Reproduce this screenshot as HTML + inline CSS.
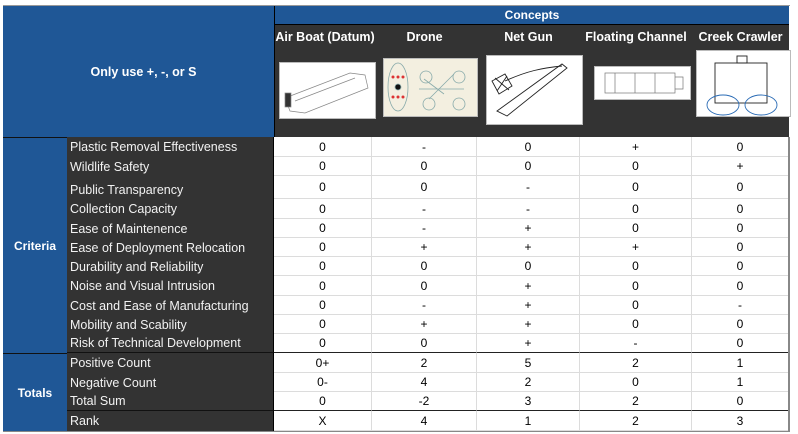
<!DOCTYPE html>
<html><head><meta charset="utf-8"><style>
*{margin:0;padding:0;box-sizing:border-box}
body{width:798px;height:434px;background:#fff;position:relative;overflow:hidden;font-family:"Liberation Sans",Arial,sans-serif;font-size:12px}
.a{position:absolute}
.blue{background:#1f5796;color:#fff;font-weight:bold}
.dark{background:#333;color:#fff}
.r{position:absolute;left:67px;width:722px;display:flex}
.r .l{width:207px;background:#333;color:#f2f2f2;padding-left:3px;font-size:12.5px;display:flex;align-items:center;border-right:1px solid #000}
.r .c{text-align:center;display:flex;align-items:center;justify-content:center;border-right:1px solid #dcdcdc;border-bottom:1px solid #dcdcdc;color:#000}
.r.k .c{border-bottom:1px solid #222}
.r.k .l{border-bottom:1px solid #111}
.c1{width:98px}.c2{width:105px}.c3{width:103px}.c4{width:112px}.c5{width:97px}
.h{position:absolute;top:30px;color:#fff;font-weight:bold;font-size:12.5px;text-align:center;white-space:nowrap}
.img{position:absolute;background:#fff;border:1px solid #bbb}
</style></head><body>
<div class="a" style="left:3px;top:5px;width:787px;height:1px;background:#999"></div>
<div class="a blue" style="left:3px;top:6px;width:271px;height:131px;display:flex;align-items:center;justify-content:center;font-size:12.5px;padding-left:10px">Only use +, -, or S</div>
<div class="a blue" style="left:274px;top:6px;width:515px;height:19px;text-align:center;line-height:19px;border-left:1px solid #000;border-bottom:1px solid #000">Concepts</div>
<div class="a dark" style="left:274px;top:25px;width:515px;height:112px;border-left:1px solid #000"></div>
<div class="h" style="left:274px;width:102px">Air Boat (Datum)</div>
<div class="h" style="left:372px;width:105px">Drone</div>
<div class="h" style="left:477px;width:103px">Net Gun</div>
<div class="h" style="left:580px;width:112px">Floating Channel</div>
<div class="h" style="left:692px;width:97px">Creek Crawler</div>
<div class="img" style="left:279px;top:62px;width:97px;height:57px"><svg width="95" height="55"><g stroke="#888" fill="none" stroke-width=".7"><path d="M5 35 L70 10 L85 12 L88 25 L25 50 L10 48 Z"/><path d="M15 38 L75 15"/><rect x="5" y="30" width="6" height="14" fill="#333"/></g></svg></div>
<div class="img" style="left:383px;top:58px;width:95px;height:59px;background:#f3efe0"><svg width="93" height="57"><g stroke="#8aa" fill="none" stroke-width=".8"><ellipse cx="14" cy="28" rx="10" ry="24"/><circle cx="14" cy="28" r="3" fill="#111"/><path d="M40 20 L60 35 M45 40 L70 15 M35 30 L80 30"/><circle cx="42" cy="18" r="6"/><circle cx="75" cy="18" r="6"/><circle cx="45" cy="45" r="6"/><circle cx="75" cy="45" r="6"/></g><g fill="#d33"><circle cx="9" cy="18" r="1.5"/><circle cx="14" cy="18" r="1.5"/><circle cx="19" cy="18" r="1.5"/><circle cx="9" cy="38" r="1.5"/><circle cx="14" cy="38" r="1.5"/><circle cx="19" cy="38" r="1.5"/></g></svg></div>
<div class="img" style="left:486px;top:55px;width:97px;height:70px"><svg width="95" height="68"><g stroke="#222" fill="none" stroke-width=".9"><path d="M10 55 L75 8 L80 12 L20 60 Z"/><path d="M5 25 L18 18 L25 30 L12 38 Z M8 22 L22 34 M20 20 L10 35"/><path d="M18 25 C40 15 55 12 75 10"/></g></svg></div>
<div class="img" style="left:594px;top:66px;width:97px;height:34px"><svg width="95" height="32"><g stroke="#777" fill="none" stroke-width=".7"><rect x="10" y="6" width="70" height="20"/><path d="M20 6 V26 M40 6 V26 M60 6 V26 M80 10 L88 10 L88 22 L80 22"/></g></svg></div>
<div class="img" style="left:696px;top:50px;width:95px;height:67px"><svg width="93" height="65"><g fill="none" stroke-width=".9"><rect x="18" y="12" width="52" height="40" stroke="#222"/><rect x="40" y="5" width="10" height="7" stroke="#222"/><ellipse cx="26" cy="54" rx="16" ry="10" stroke="#2a6bb5"/><ellipse cx="64" cy="54" rx="16" ry="10" stroke="#2a6bb5"/></g></svg></div>

<div class="a blue" style="left:3px;top:137px;width:64px;height:216px;display:flex;align-items:center;justify-content:center;border-top:1px solid #111">Criteria</div>
<div class="a blue" style="left:3px;top:353px;width:64px;height:78px;display:flex;align-items:center;justify-content:center;border-top:1px solid #111">Totals</div>

<div class="r" style="top:137px;height:20px"><div class="l">Plastic Removal Effectiveness</div><div class="c c1">0</div><div class="c c2">-</div><div class="c c3">0</div><div class="c c4">+</div><div class="c c5">0</div></div>
<div class="r" style="top:157px;height:19px"><div class="l">Wildlife Safety</div><div class="c c1">0</div><div class="c c2">0</div><div class="c c3">0</div><div class="c c4">0</div><div class="c c5">+</div></div>
<div class="r" style="top:176px;height:23px"><div class="l" style="align-items:flex-end;padding-bottom:2px">Public Transparency</div><div class="c c1">0</div><div class="c c2">0</div><div class="c c3">-</div><div class="c c4">0</div><div class="c c5">0</div></div>
<div class="r" style="top:199px;height:20px"><div class="l">Collection Capacity</div><div class="c c1">0</div><div class="c c2">-</div><div class="c c3">-</div><div class="c c4">0</div><div class="c c5">0</div></div>
<div class="r" style="top:219px;height:19px"><div class="l">Ease of Maintenence</div><div class="c c1">0</div><div class="c c2">-</div><div class="c c3">+</div><div class="c c4">0</div><div class="c c5">0</div></div>
<div class="r" style="top:238px;height:19px"><div class="l">Ease of Deployment Relocation</div><div class="c c1">0</div><div class="c c2">+</div><div class="c c3">+</div><div class="c c4">+</div><div class="c c5">0</div></div>
<div class="r" style="top:257px;height:19px"><div class="l">Durability and Reliability</div><div class="c c1">0</div><div class="c c2">0</div><div class="c c3">0</div><div class="c c4">0</div><div class="c c5">0</div></div>
<div class="r" style="top:276px;height:20px"><div class="l">Noise and Visual Intrusion</div><div class="c c1">0</div><div class="c c2">0</div><div class="c c3">+</div><div class="c c4">0</div><div class="c c5">0</div></div>
<div class="r" style="top:296px;height:19px"><div class="l">Cost and Ease of Manufacturing</div><div class="c c1">0</div><div class="c c2">-</div><div class="c c3">+</div><div class="c c4">0</div><div class="c c5">-</div></div>
<div class="r" style="top:315px;height:19px"><div class="l">Mobility and Scability</div><div class="c c1">0</div><div class="c c2">+</div><div class="c c3">+</div><div class="c c4">0</div><div class="c c5">0</div></div>
<div class="r k" style="top:334px;height:19px"><div class="l">Risk of Technical Development</div><div class="c c1">0</div><div class="c c2">0</div><div class="c c3">+</div><div class="c c4">-</div><div class="c c5">0</div></div>
<div class="r" style="top:353px;height:20px"><div class="l">Positive Count</div><div class="c c1">0+</div><div class="c c2">2</div><div class="c c3">5</div><div class="c c4">2</div><div class="c c5">1</div></div>
<div class="r" style="top:373px;height:19px"><div class="l">Negative Count</div><div class="c c1">0-</div><div class="c c2">4</div><div class="c c3">2</div><div class="c c4">0</div><div class="c c5">1</div></div>
<div class="r k" style="top:392px;height:19px"><div class="l">Total Sum</div><div class="c c1">0</div><div class="c c2">-2</div><div class="c c3">3</div><div class="c c4">2</div><div class="c c5">0</div></div>
<div class="r" style="top:411px;height:20px"><div class="l">Rank</div><div class="c c1">X</div><div class="c c2">4</div><div class="c c3">1</div><div class="c c4">2</div><div class="c c5">3</div></div>
<div class="a" style="left:3px;top:431px;width:787px;height:1px;background:#888"></div>
<div class="a" style="left:788px;top:137px;width:2px;height:295px;background:#888"></div>
</body></html>
